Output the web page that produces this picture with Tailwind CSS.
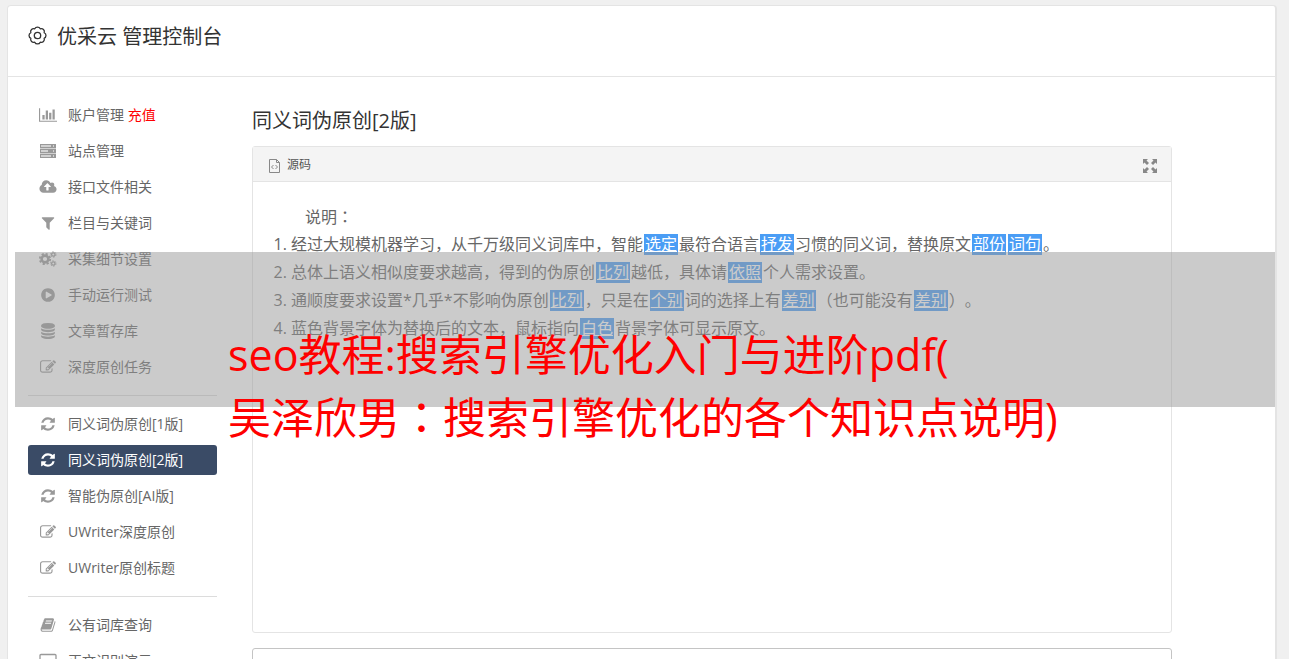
<!DOCTYPE html>
<html lang="zh-CN">
<head>
    <meta charset="UTF-8">
    <meta name="viewport" content="width=device-width, initial-scale=1.0">
    <title>优采云 管理控制台</title>
    <script src="https://cdn.jsdelivr.net/npm/@tailwindcss/browser@4"></script>
</head>
<body class="h-screen overflow-hidden bg-[#f0f0f0] font-['Open_Sans','Noto_Sans_CJK_SC',sans-serif] text-[#666] [text-spacing-trim:space-all]">
    <!-- Icon shapes -->
    <svg class="hidden">
        <symbol id="i-chart" viewBox="0 0 2048 1792"><path d="M640 896v512h-256v-512h256zm384-512v1024h-256v-1024h256zm1024 1152v128h-2048v-1536h128v1408h1920zm-640-896v768h-256v-768h256zm384-384v1152h-256v-1152h256z"/></symbol>
        <symbol id="i-server" viewBox="0 0 18 16">
            <path opacity=".45" d="M1 2h16v12H1z"/>
            <path fill-rule="evenodd" d="M1 1h16v4H1zM2 2v2h10V2zM14 2h1v2h-1zM1 6h16v4H1zM2 7v2h7V7zM14 7h1v2h-1zM1 11h16v4H1zM2 12v2h10v-2zM14 12h1v2h-1z"/>
        </symbol>
        <symbol id="i-cloud" viewBox="0 0 1920 1792"><path d="M1280 864q0-14-9-23l-352-352q-9-9-23-9t-23 9l-351 351q-10 12-10 24 0 14 9 23t23 9h224v352q0 13 9.5 22.5t22.5 9.5h192q13 0 22.5-9.5t9.5-22.5v-352h224q13 0 22.5-9.5t9.5-22.5zm640 288q0 159-112.5 271.5t-271.5 112.5h-1088q-185 0-316.5-131.5t-131.5-316.5q0-130 70-240t188-165q-2-30-2-43 0-212 150-362t362-150q156 0 285.5 87t188.5 231q71-62 166-62 106 0 181 75t75 181q0 76-41 138 130 31 213.5 135.5t83.5 238.5z"/></symbol>
        <symbol id="i-filter" viewBox="0 0 1792 1792"><path d="M1595 295q17 41-14 70l-493 493v742q0 42-39 59-13 5-25 5-27 0-45-19l-256-256q-19-19-19-45v-486l-493-493q-31-29-14-70 17-39 59-39h1280q42 0 59 39z"/></symbol>
        <symbol id="i-cogs" viewBox="0 0 18 16">
            <g fill="none" stroke="currentColor">
                <circle cx="6" cy="8" r="3.4" stroke-width="2.6"/>
                <circle cx="6" cy="8" r="5.2" stroke-width="1.8" stroke-dasharray="2.2 1.884"/>
                <circle cx="14.3" cy="3.5" r="1.7" stroke-width="1.3"/>
                <circle cx="14.3" cy="3.5" r="2.7" stroke-width="1" stroke-dasharray="1.4 1.427"/>
                <circle cx="14.3" cy="12.5" r="1.7" stroke-width="1.3"/>
                <circle cx="14.3" cy="12.5" r="2.7" stroke-width="1" stroke-dasharray="1.4 1.427"/>
            </g>
        </symbol>
        <symbol id="i-play" viewBox="0 0 1792 1792"><path d="M896 128q209 0 385.5 103t279.5 279.5 103 385.5-103 385.5-279.5 279.5-385.5 103-385.5-103-279.5-279.5-103-385.5 103-385.5 279.5-279.5 385.5-103zm384 823q32-18 32-55t-32-55l-544-320q-31-19-64-1-32 19-32 56v640q0 37 32 56 16 8 32 8 17 0 32-9z"/></symbol>
        <symbol id="i-database" viewBox="0 0 1792 1792"><path d="M896 768q237 0 443-43t325-127v170q0 69-103 128t-280 93.500-385 34.500-385-34.500-280-93.500-103-128v-170q119 84 325 127t443 43zm0 768q237 0 443-43t325-127v170q0 69-103 128t-280 93.500-385 34.500-385-34.500-280-93.500-103-128v-170q119 84 325 127t443 43zm0-384q237 0 443-43t325-127v170q0 69-103 128t-280 93.500-385 34.500-385-34.500-280-93.500-103-128v-170q119 84 325 127t443 43zm0-1152q208 0 385 34.500t280 93.500 103 128v128q0 69-103 128t-280 93.500-385 34.500-385-34.500-280-93.500-103-128v-128q0-69 103-128t280-93.500 385-34.500z"/></symbol>
        <symbol id="i-edit" viewBox="0 0 1792 1792"><path d="M888 1184l116-116-152-152-116 116v56h96v96h56zm440-720q-16-16-33 1l-350 350q-17 17-1 33t33-1l350-350q17-17 1-33zm80 594v190q0 119-84.5 203.5t-203.5 84.5h-832q-119 0-203.5-84.5t-84.5-203.5v-832q0-119 84.5-203.5t203.5-84.5h832q63 0 117 25 15 7 18 23 3 17-9 29l-49 49q-14 14-32 8-23-6-45-6h-832q-66 0-113 47t-47 113v832q0 66 47 113t113 47h832q66 0 113-47t47-113v-126q0-13 9-22l64-64q15-15 35-7t20 29zm-96-738l288 288-672 672h-288v-288zm444 132l-92 92-288-288 92-92q28-28 68-28t68 28l152 152q28 28 28 68t-28 68z"/></symbol>
        <symbol id="i-refresh" viewBox="0 0 1792 1792"><path d="M1639 1056q0 5-1 7-64 268-268 434.5t-478 166.5q-146 0-282.5-55t-243.5-157l-129 129q-19 19-45 19t-45-19-19-45v-448q0-26 19-45t45-19h448q26 0 45 19t19 45-19 45l-137 137q71 66 161 102t187 36q134 0 250-65t186-179q11-17 53-117 8-23 30-23h192q13 0 22.5 9.5t9.5 22.5zm25-800v448q0 26-19 45t-45 19h-448q-26 0-45-19t-19-45 19-45l138-138q-148-137-349-137-134 0-250 65t-186 179q-11 17-53 117-8 23-30 23h-199q-13 0-22.5-9.5t-9.5-22.5v-7q65-268 270-434.5t480-166.5q146 0 284 55.5t245 156.5l130-129q19-19 45-19t45 19 19 45z"/></symbol>
        <symbol id="i-book" viewBox="0 0 1792 1792"><path d="M1703 478q40 57 18 129l-275 906q-19 64-76.5 107.5t-122.5 43.5h-923q-77 0-148.5-53.5t-99.5-131.5q-24-67-2-127 0-4 3-27t4-37q1-8-3-21.5t-3-19.5q2-11 8-21t16.500-23.500 16.500-23.500q23-38 45-91.500t30-91.500q3-10 .5-30t-.5-28q3-11 17-28t17-23q21-36 42-92t25-90q1-9-2.500-32t.5-28q4-13 22-30.500t22-22.500q19-26 42.500-84.500t27.500-96.500q1-8-3-25.500t-2-26.500q2-8 9-18t18-23 17-21q8-12 16.500-30.500t15-35 16-36 19.500-32 26.500-23.500 36-11.500 47.500 5.500l-1 3q38-9 51-9h761q74 0 114 56t18 130l-274 906q-36 119-71.500 153.500t-128.500 34.500h-869q-27 0-38 15-11 16-1 43 24 70 144 70h923q29 0 56-15.500t35-41.500l300-987q7-22 5-57 38 15 59 43zm-1064 2q-4 13 2 22.500t20 9.500h608q13 0 25.500-9.500t16.500-22.500l21-64q4-13-2-22.500t-20-9.500h-608q-13 0-25.500 9.500t-16.500 22.500zm-83 256q-4 13 2 22.500t20 9.500h608q13 0 25.500-9.500t16.500-22.500l21-64q4-13-2-22.500t-20-9.500h-608q-13 0-25.500 9.500t-16.500 22.500z"/></symbol>
        <symbol id="i-screen" viewBox="0 0 18 16"><path fill="none" stroke="currentColor" stroke-width="1.3" d="M2 1.500h14a1 1 0 0 1 1 1v8.500a1 1 0 0 1-1 1H2a1 1 0 0 1-1-1V2.500a1 1 0 0 1 1-1zM5 15h8M9 12v3"/></symbol>
    </svg>

    <div class="relative mt-[5px] mr-3 ml-[7px] rounded-t-sm border border-r-2 border-[#e4e4e4] bg-white">
        <!-- Header -->
        <header class="flex h-[71px] items-start gap-[10px] border-b border-[#e4e4e4] pt-[17px] pl-5 text-[#333]">
            <svg class="mt-[3px] h-[19px] w-[19px]" viewBox="0 0 19 19" fill="none" stroke="currentColor" stroke-width="1.3">
                <circle cx="9.5" cy="9.5" r="3.2"/>
                <path stroke-linejoin="round" d="M6.740 2.850A3 3 0 0 1 12.260 2.850A3 3 0 0 1 16.150 6.740A3 3 0 0 1 16.150 12.260A3 3 0 0 1 12.260 16.150A3 3 0 0 1 6.740 16.150A3 3 0 0 1 2.850 12.260A3 3 0 0 1 2.850 6.740A3 3 0 0 1 6.740 2.850z"/>
            </svg>
            <h1 class="text-[20px] leading-[28px]">优采云 管理控制台</h1>
        </header>

        <div class="flex gap-[35px] pt-[23px] pl-5">
            <!-- Sidebar -->
            <nav class="flex w-[189px] shrink-0 flex-col gap-[6px] text-[14px] leading-[30px] [&_a]:flex [&_a]:h-[30px] [&_a]:items-center [&_a]:gap-[11px] [&_a]:rounded-[3px] [&_a]:pl-[11px] [&_hr]:my-[7px] [&_hr]:border-[#dcdcdc] [&_svg]:h-4 [&_svg]:w-[18px] [&_svg]:fill-current [&_svg]:text-[#999]">
                <a href="#"><svg><use href="#i-chart"/></svg><span>账户管理 <span class="text-[#f00]">充值</span></span></a>
                <a href="#"><svg><use href="#i-server"/></svg>站点管理</a>
                <a href="#"><svg><use href="#i-cloud"/></svg>接口文件相关</a>
                <a href="#"><svg><use href="#i-filter"/></svg>栏目与关键词</a>
                <a href="#"><svg><use href="#i-cogs"/></svg>采集细节设置</a>
                <a href="#"><svg><use href="#i-play"/></svg>手动运行测试</a>
                <a href="#"><svg><use href="#i-database"/></svg>文章暂存库</a>
                <a href="#"><svg><use href="#i-edit"/></svg>深度原创任务</a>
                <hr>
                <a href="#"><svg><use href="#i-refresh"/></svg>同义词伪原创[1版]</a>
                <a href="#" class="bg-[#3a4b66] text-white"><svg class="text-white!"><use href="#i-refresh"/></svg>同义词伪原创[2版]</a>
                <a href="#"><svg><use href="#i-refresh"/></svg>智能伪原创[AI版]</a>
                <a href="#"><svg><use href="#i-edit"/></svg>UWriter深度原创</a>
                <a href="#"><svg><use href="#i-edit"/></svg>UWriter原创标题</a>
                <hr>
                <a href="#"><svg><use href="#i-book"/></svg>公有词库查询</a>
                <a href="#"><svg><use href="#i-screen"/></svg>正文识别演示</a>
            </nav>

            <!-- Content -->
            <main class="mr-[103px] min-w-0 flex-1">
                <h2 class="mt-[7px] text-[20px] leading-[28px] text-[#333]">同义词伪原创[2版]</h2>

                <section class="mt-[11px] min-h-[487px] rounded-[3px] border border-[#e4e4e4]">
                    <div class="flex h-[35px] items-center justify-between border-b border-[#e4e4e4] bg-[#f4f4f4] pt-[2px] pr-[14px] pl-4">
                        <button class="flex items-center gap-[7px] text-[12px] text-[#555]">
                            <svg class="mt-[2px] h-[14px] w-[11px]" viewBox="0 0 11 14" fill="none" stroke="#888">
                                <path d="M.5.5h7l3 3v10H.5zM7.500.5v3h3M4.500 6L2.500 8l2 2M6.500 6l2 2-2 2"/>
                            </svg>
                            源码
                        </button>
                        <button aria-label="全屏" class="mt-[2px]">
                            <svg class="h-[14px] w-[14px]" viewBox="0 0 14 14" fill="#888">
                                <path d="M0 0h5L3.500 1.500 6 4 4 6 1.500 3.500 0 5zM14 0v5l-1.500-1.500L10 6 8 4l2.500-2.500L9 0zM0 14V9l1.500 1.500L4 8l2 2-2.500 2.500L5 14zM14 14H9l1.500-1.500L8 10l2-2 2.500 2.500L14 9z"/>
                            </svg>
                        </button>
                    </div>
                    <div class="px-5 pt-5 text-[16px] leading-[28px] [&_li]:h-7 [&_u]:mx-px [&_u]:inline-block [&_u]:h-[21px] [&_u]:bg-[#4a9df5] [&_u]:px-px [&_u]:leading-[21px] [&_u]:text-white">
                        <p class="h-7 indent-8">说明<span lang="zh-TW" class="font-['Noto_Sans_CJK_TC',sans-serif]">：</span></p>
                        <ol class="list-decimal pl-[18px]">
                            <li>经过大规模机器学习，从千万级同义词库中，智能<u>选定</u>最符合语言<u>抒发</u>习惯的同义词，替换原文<u>部份</u><u>词句</u>。</li>
                            <li>总体上语义相似度要求越高，得到的伪原创<u>比列</u>越低，具体请<u>依照</u>个人需求设置。</li>
                            <li>通顺度要求设置*几乎*不影响伪原创<u>比列</u>，只是在<u>个别</u>词的选择上有<u>差别</u>（也可能没有<u>差别</u>）。</li>
                            <li>蓝色背景字体为替换后的文本，鼠标指向<u>白色</u>背景字体可显示原文。</li>
                        </ol>
                    </div>
                </section>

                <section class="mt-[15px] h-[200px] rounded-[3px] border border-[#c4c4c4]"></section>
            </main>
        </div>

        <!-- Caption banner laid over the page -->
        <div class="absolute top-[246px] right-0 left-[7px] h-[155px] bg-[#979797]/50"></div>
        <p class="absolute top-[319px] left-[220px] text-[43px] leading-[60px] whitespace-nowrap text-[#f00]">seo教程:搜索引擎优化入门与进阶pdf(<br>吴泽欣男<span lang="zh-TW" class="font-['Noto_Sans_CJK_TC',sans-serif]">：</span>搜索引擎优化的各个知识点说明)</p>
    </div>
</body>
</html>
